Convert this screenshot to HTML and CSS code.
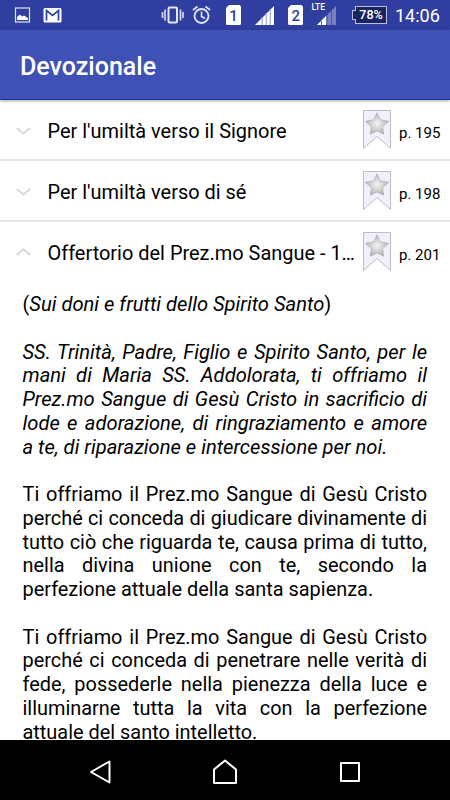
FILE: index.html
```
<!DOCTYPE html>
<html lang="it">
<head>
    <meta charset="UTF-8">
    <title>Devozionale</title>
    <link rel="stylesheet" href="styles.css">
</head>
<body>

    <svg class="defs" width="0" height="0">
        <defs>
            <radialGradient id="star-fill" cx="50%" cy="50%" r="50%">
                <stop offset="0" stop-color="#f4f4f4"/>
                <stop offset="1" stop-color="#b4b4b4"/>
            </radialGradient>
            <symbol id="bookmark" viewBox="0 0 28 40">
                <path d="M0.5 0.5H27.5V38.5L14 26.5L0.5 38.5Z" fill="#f0f0fd" stroke="#b6b6c0" stroke-width="0.9"/>
                <path d="M14 2.8L17.3 9.8L25.6 11.3L19.6 16.8L20.8 24.2L14 20.9L7.2 24.2L8.4 16.8L2.4 11.3L10.7 9.8Z" fill="url(#star-fill)" stroke="#a8a8a8" stroke-width="0.6"/>
            </symbol>
            <symbol id="chevron" viewBox="0 0 16 8">
                <path d="M0.8 1L7.5 6.5L14.2 1" fill="none" stroke="#d9d9d9" stroke-width="2"/>
            </symbol>
            <symbol id="chevron-up" viewBox="0 0 16 8">
                <path d="M0.8 7L7.5 1.2L14.2 7" fill="none" stroke="#d9d9d9" stroke-width="2"/>
            </symbol>
        </defs>
    </svg>

    <div class="status-bar">
        <svg class="status-icons" width="340" height="30" viewBox="0 0 340 30">
            <!-- picture -->
            <rect x="15.5" y="8" width="14" height="14" fill="none" stroke="#dfe2f5" stroke-width="1.2"/>
            <path d="M17 20V17L20 14.5L22 16.5L24 15.5L28 18V20Z" fill="#fff"/>
            <!-- mail -->
            <rect x="43.5" y="8" width="18" height="14.5" rx="1.5" fill="#fff"/>
            <path d="M46.5 20.5V10.5L52.5 15.5L58.5 10.5V20.5" fill="none" stroke="#303f9f" stroke-width="1.7"/>
            <!-- vibrate -->
            <rect x="168.5" y="7.5" width="8.5" height="15" rx="1" fill="none" stroke="#e4e6f6" stroke-width="2"/>
            <path d="M165 9.5V20.5M162.5 12V18M180.5 9.5V20.5M183 12V18" stroke="#d3d7ef" stroke-width="1.7"/>
            <!-- alarm -->
            <circle cx="201.5" cy="16" r="7" fill="none" stroke="#e4e6f6" stroke-width="1.8"/>
            <path d="M201.5 11.5V16.5L205 18.5M193 10L197.5 6.5M210 10L205.5 6.5" fill="none" stroke="#e4e6f6" stroke-width="1.6"/>
            <!-- sim 1 -->
            <path d="M229 5H239.5L241 6.5V23.5Q241 25 239.5 25H227.5Q226 25 226 23.5V8Z" fill="#fff"/>
            <text class="sim" x="233.5" y="21">1</text>
            <path d="M255 25L274 6V25Z" fill="#fff"/>
            <path d="M262.2 17V25M266.3 13V25M270.3 9V25" stroke="#a9b0d9" stroke-width="1.3"/>
            <!-- sim 2 -->
            <path d="M291 5H301.5L303 6.5V23.5Q303 25 301.5 25H289.5Q288 25 288 23.5V8Z" fill="#fff"/>
            <text class="sim" x="295.8" y="21">2</text>
            <path d="M317 25L336 6V25Z" fill="#7781c2"/>
            <path d="M317 25L326 16V25Z" fill="#fff"/>
            <path d="M321.5 21V25M327 15V25M331.5 10V25" stroke="#4a57ab" stroke-width="1"/>
            <text class="lte" x="311.5" y="10">LTE</text>
        </svg>
        <div class="battery">78%</div>
        <div class="clock">14:06</div>
    </div>

    <div class="toolbar">Devozionale</div>

    <div class="list">
        <div class="row">
            <svg class="arrow" width="16" height="8"><use href="#chevron"/></svg>
            <div class="row-title">Per l'umiltà verso il Signore</div>
            <svg class="bookmark" width="28" height="40"><use href="#bookmark"/></svg>
            <div class="page-number">p. 195</div>
        </div>
        <div class="row">
            <svg class="arrow" width="16" height="8"><use href="#chevron"/></svg>
            <div class="row-title">Per l'umiltà verso di sé</div>
            <svg class="bookmark" width="28" height="40"><use href="#bookmark"/></svg>
            <div class="page-number">p. 198</div>
        </div>
        <div class="row open">
            <svg class="arrow" width="16" height="8"><use href="#chevron-up"/></svg>
            <div class="row-title">Offertorio del Prez.mo Sangue - 1…</div>
            <svg class="bookmark" width="28" height="40"><use href="#bookmark"/></svg>
            <div class="page-number">p. 201</div>
        </div>

        <div class="prayer">
            <p>(<i>Sui doni e frutti dello Spirito Santo</i>)</p>
            <p><i>SS. Trinità, Padre, Figlio e Spirito Santo, per le mani di Maria SS. Addolorata, ti offriamo il Prez.mo Sangue di Gesù Cristo in sacrificio di lode e adorazione, di ringraziamento e amore a te, di riparazione e intercessione per noi.</i></p>
            <p>Ti offriamo il Prez.mo Sangue di Gesù Cristo perché ci conceda di giudicare divinamente di tutto ciò che riguarda te, causa prima di tutto, nella divina unione con te, secondo la perfezione attuale della santa sapienza.</p>
            <p>Ti offriamo il Prez.mo Sangue di Gesù Cristo perché ci conceda di penetrare nelle verità di fede, possederle nella pienezza della luce e illuminarne tutta la vita con la perfezione attuale del santo intelletto.</p>
        </div>
    </div>

    <div class="nav-bar">
        <svg width="26" height="26" viewBox="0 0 26 26"><path d="M22.5 2.5V23.5L4 13Z"/></svg>
        <svg width="26" height="26" viewBox="0 0 26 26"><path d="M2 24V10.5L13 1.5L24 10.5V24Z"/></svg>
        <svg width="26" height="26" viewBox="0 0 26 26"><path d="M4 4H22V22H4Z"/></svg>
    </div>

</body>
</html>
```
FILE: styles.css
```
body {
    margin: 0;
    height: 800px;
    display: flex;
    flex-direction: column;
    overflow: hidden;
    font-family: Roboto, sans-serif;
    background-color: #fff;
    color: #000;
}
.defs {
    position: absolute;
}
.status-bar {
    flex: none;
    display: flex;
    align-items: center;
    height: 30px;
    background-color: #303f9f;
    color: #fff;
}
.status-icons {
    flex: none;
}
.sim {
    font-size: 15px;
    font-weight: 500;
    text-anchor: middle;
    fill: #303f9f;
}
.lte {
    font-size: 8.5px;
    font-weight: 500;
    fill: #fff;
}
.battery {
    position: relative;
    box-sizing: border-box;
    width: 32px;
    height: 18px;
    margin-left: 15px;
    border: 1.5px solid #b9bedf;
    background-color: #1b255f;
    font-size: 12.5px;
    font-weight: 500;
    line-height: 16px;
    text-align: center;
}
.battery::before {
    content: "";
    position: absolute;
    left: -4px;
    top: 3px;
    width: 3px;
    height: 8px;
    border: 1px solid #b9bedf;
    border-right: none;
    background-color: #1b255f;
}
.clock {
    margin-left: 8px;
    font-size: 18px;
}
.toolbar {
    flex: none;
    position: relative;
    box-sizing: border-box;
    height: 70px;
    padding-left: 20px;
    border-bottom: 1px solid #0d35a8;
    background-color: #3f51b5;
    box-shadow: 0 1px 3px rgba(0, 0, 0, 0.35);
    color: #fff;
    font-size: 25px;
    font-weight: 500;
    line-height: 74px;
}
.list {
    flex: 1;
    min-height: 0;
    overflow: hidden;
}
.row {
    display: flex;
    align-items: center;
    box-sizing: border-box;
    height: 61px;
    padding: 1px 10px 0 16px;
    border-bottom: 2px solid #e4e4e4;
}
.row.open {
    border-bottom-color: transparent;
}
.arrow {
    flex: none;
    margin-top: 2px;
}
.row.open .arrow {
    margin-top: 0;
}
.row-title {
    flex: 1;
    min-width: 0;
    margin-left: 15.5px;
    padding-top: 2px;
    white-space: nowrap;
    font-size: 19.95px;
}
.bookmark {
    flex: none;
    margin-left: 8px;
}
.page-number {
    flex: none;
    width: 41px;
    margin-left: 8px;
    padding-top: 5px;
    font-size: 15px;
    white-space: nowrap;
}
.prayer {
    padding: 10px 23px 0 22.5px;
    font-size: 19.92px;
    line-height: 23.75px;
    text-align: justify;
}
.prayer p {
    margin: 0 0 23.75px;
}
.prayer i {
    font-size: 20.15px;
}
.nav-bar {
    flex: none;
    display: flex;
    justify-content: space-between;
    align-items: center;
    box-sizing: border-box;
    height: 60px;
    padding: 4px 87px 0;
    background-color: #000;
}
.nav-bar path {
    fill: none;
    stroke: #fff;
    stroke-width: 2;
    stroke-linejoin: round;
}
```
